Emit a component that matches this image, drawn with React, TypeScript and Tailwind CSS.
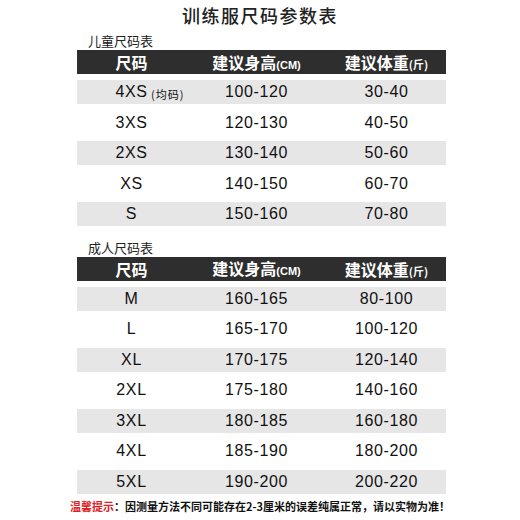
const CN = "font-['Noto_Sans_CJK_SC',sans-serif]";
const NUM = "font-['Liberation_Sans','Noto_Sans_CJK_SC',sans-serif]";

type Row = { size: string; height: string; weight: string; note?: string };

const kids: Row[] = [
  { size: "4XS", height: "100-120", weight: "30-40", note: " (均码)" },
  { size: "3XS", height: "120-130", weight: "40-50" },
  { size: "2XS", height: "130-140", weight: "50-60" },
  { size: "XS", height: "140-150", weight: "60-70" },
  { size: "S", height: "150-160", weight: "70-80" },
];

const adults: Row[] = [
  { size: "M", height: "160-165", weight: "80-100" },
  { size: "L", height: "165-170", weight: "100-120" },
  { size: "XL", height: "170-175", weight: "120-140" },
  { size: "2XL", height: "175-180", weight: "140-160" },
  { size: "3XL", height: "180-185", weight: "160-180" },
  { size: "4XL", height: "185-190", weight: "180-200" },
  { size: "5XL", height: "190-200", weight: "200-220" },
];

const cols = "grid grid-cols-[109px_141px_119px] items-center";

function Header() {
  return (
    <div className={`${cols} h-[24px] mb-[3px] bg-[#2e2e2e] text-white ${CN} font-bold`}>
      <div className="text-center text-[16px] leading-none">尺码</div>
      <div className="text-center text-[16px] leading-none">
        建议身高<span className={`${NUM} text-[11px]`}>(CM)</span>
      </div>
      <div className="text-center text-[16px] leading-none">
        建议体重<span className="text-[11px]">(斤)</span>
      </div>
    </div>
  );
}

function SizeRow({ row, shaded }: { row: Row; shaded: boolean }) {
  return (
    <div className="py-[3px] h-[30.5px]">
      <div
        className={`${cols} h-[24px] ${shaded ? "bg-[#e6e6e6]" : ""} ${NUM} text-[16px] tracking-[0.6px] text-[#111]`}
      >
        <div className="text-center">
          <span className="relative">
            {row.size}
            {row.note && (
              <span className={`absolute left-full top-[3px] whitespace-pre text-[11px] tracking-[1px] ${CN}`}>
                {row.note}
              </span>
            )}
          </span>
        </div>
        <div className="text-center">{row.height}</div>
        <div className="text-center">{row.weight}</div>
      </div>
    </div>
  );
}

function Table({ label, rows, className }: { label: string; rows: Row[]; className?: string }) {
  return (
    <div className={className}>
      <div className={`${CN} pl-[11px] text-[13px] leading-[14px] text-[#222] h-[15px] mb-[1px]`}>{label}</div>
      <Header />
      {rows.map((r, i) => (
        <SizeRow key={r.size} row={r} shaded={i % 2 === 0} />
      ))}
    </div>
  );
}

export default function App() {
  return (
    <div className="w-[520px] h-[520px] bg-white overflow-hidden">
      <div className={`${CN} text-center text-[18px] font-medium tracking-[1.5px] text-[#222] pt-[4px] leading-[22px]`}>
        训练服尺码参数表
      </div>
      <div className="ml-[77px] w-[369px] mt-[8px]">
        <Table label="儿童尺码表" rows={kids} />
        <Table label="成人尺码表" rows={adults} className="mt-[11px]" />
      </div>
      <div className={`${CN} mt-[2px] text-center text-[11px] font-bold text-[#111] leading-[14px]`}>
        <span className="text-[#e0201f]">温馨提示</span>：因测量方法不同可能存在2-3厘米的误差纯属正常，请以实物为准！
      </div>
    </div>
  );
}
